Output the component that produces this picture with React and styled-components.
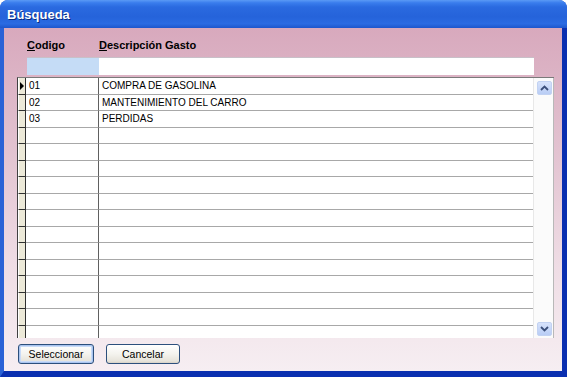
import React from "react";
import styled, { createGlobalStyle } from "styled-components";

const Global = createGlobalStyle`
  html, body { margin: 0; padding: 0; background: #ffffff; }
  body { font-family: "Liberation Sans", Arial, sans-serif; }
  * { box-sizing: border-box; }
`;

const Window = styled.div`
  width: 567px;
  height: 377px;
  display: flex;
  flex-direction: column;
  border-radius: 8px 8px 0 0;
  overflow: hidden;
  background: #1c4fc8;
`;

const TitleBar = styled.div`
  height: 28px;
  flex: none;
  display: flex;
  align-items: center;
  padding: 1px 0 0 7px;
  background: linear-gradient(
    to bottom,
    #5a9af5 0%,
    #3a7ded 10%,
    #2a6ae0 25%,
    #2563da 60%,
    #2a6be2 85%,
    #1d56cc 100%
  );
`;

const Title = styled.span`
  color: #ffffff;
  font-family: "Liberation Sans", Arial, sans-serif;
  font-weight: bold;
  font-size: 13px;
  text-shadow: 1px 1px 0 #0a2a80;
`;

const Client = styled.div`
  flex: 1;
  display: flex;
  flex-direction: column;
  border-left: 4px solid #2a62d6;
  border-right: 5px solid #0a2fb0;
  border-bottom: 6px solid #0a2fb0;
  background: linear-gradient(to bottom, #d8a9bd 0%, #e2c2d0 35%, #efdde5 70%, #f6eef2 100%);
  padding-top: 10px;
`;

const LabelRow = styled.div`
  display: grid;
  grid-template-columns: 72px 1fr;
  margin-left: 23px;
  height: 14px;
  font-size: 11px;
  line-height: 14px;
  font-weight: bold;
  color: #000;
`;

const Label = styled.span`
  white-space: nowrap;
  & u { text-decoration: underline; }
`;

const FilterRow = styled.div`
  display: flex;
  margin: 5px 0 0 23px;
  height: 18px;
`;

const FilterInput = styled.div`
  width: ${(p) => p.$w}px;
  height: 18px;
  background: ${(p) => (p.$active ? "#c5dcf6" : "#ffffff")};
  border-top: 1px solid #c8c0c8;
`;

const GridWrap = styled.div`
  margin: 2px 0 0 13px;
  width: 537px;
  height: 261px;
  display: flex;
  border-top: 1px solid #7a7a7a;
  border-left: 1px solid #404040;
  overflow: hidden;
`;

const Rows = styled.div`
  flex: 1;
  display: flex;
  flex-direction: column;
  background: #ffffff;
`;

const Row = styled.div`
  flex: none;
  height: 16.5px;
  display: grid;
  grid-template-columns: 8px 73px 1fr;
  font-size: 10px;
  color: #000;
`;

const RowHead = styled.div`
  background: #ece9d8;
  border-right: 1px solid #303030;
  border-bottom: 1px solid #303030;
  border-left: 1px solid #ffffff;
  display: flex;
  align-items: center;
  justify-content: flex-start;
`;

const Cell = styled.div`
  border-bottom: 1px solid #a8a8a8;
  border-right: ${(p) => (p.$sep ? "1px solid #606060" : "none")};
  padding-left: 3px;
  display: flex;
  align-items: center;
  white-space: nowrap;
  overflow: hidden;
`;

const Pointer = styled.span`
  width: 0;
  height: 0;
  border-top: 4px solid transparent;
  border-bottom: 4px solid transparent;
  border-left: 4px solid #000;
  margin-left: 1px;
`;

const ScrollBar = styled.div`
  width: 21px;
  flex: none;
  display: flex;
  flex-direction: column;
  justify-content: space-between;
  align-items: center;
  padding: 3px 0 2px 2px;
  background: #fbfbfb;
  border-left: 1px solid #e8e8e8;
  border-right: 1px solid #b8b8b8;
`;

const ScrollBtn = styled.div`
  width: 15px;
  height: 14px;
  border-radius: 2px;
  background: linear-gradient(to bottom, #d6e2fb, #b9cdf5);
  border: 1px solid #c2d2f2;
  display: flex;
  align-items: center;
  justify-content: center;
`;

const ButtonRow = styled.div`
  display: flex;
  gap: 12px;
  margin: 6px 0 0 14px;
`;

const Button = styled.button`
  width: ${(p) => p.$w}px;
  height: 20px;
  padding: 0;
  border: 1px solid #2c4f7c;
  border-radius: 3px;
  background: linear-gradient(to bottom, #ffffff 0%, #f4f3ee 50%, #e6e3da 90%, #d6d0c5 100%);
  box-shadow: ${(p) => (p.$default ? "inset 0 0 0 1px #a9c4ef, inset 0 0 0 2px #c9dbf7" : "none")};
  font-family: "Liberation Sans", Arial, sans-serif;
  font-size: 10.5px;
  color: #000;
`;

const Chevron = ({ up }) => (
  <svg width="9" height="6" viewBox="0 0 9 6">
    <path
      d={up ? "M1 5 L4.5 1.5 L8 5" : "M1 1 L4.5 4.5 L8 1"}
      fill="none"
      stroke="#3b4f7a"
      strokeWidth="1.8"
    />
  </svg>
);

const data = [
  { code: "01", desc: "COMPRA DE GASOLINA" },
  { code: "02", desc: "MANTENIMIENTO DEL CARRO" },
  { code: "03", desc: "PERDIDAS" },
];

export default function App() {
  const rows = Array.from({ length: 16 }, (_, i) => data[i] || { code: "", desc: "" });
  return (
    <>
      <Global />
      <Window>
        <TitleBar>
          <Title>Búsqueda</Title>
        </TitleBar>
        <Client>
          <LabelRow>
            <Label>
              <u>C</u>odigo
            </Label>
            <Label>
              <u>D</u>escripción Gasto
            </Label>
          </LabelRow>
          <FilterRow>
            <FilterInput $w={72} $active />
            <FilterInput $w={435} />
          </FilterRow>
          <GridWrap>
            <Rows>
              {rows.map((r, i) => (
                <Row key={i}>
                  <RowHead>{i === 0 && <Pointer />}</RowHead>
                  <Cell $sep>{r.code}</Cell>
                  <Cell>{r.desc}</Cell>
                </Row>
              ))}
            </Rows>
            <ScrollBar>
              <ScrollBtn>
                <Chevron up />
              </ScrollBtn>
              <ScrollBtn>
                <Chevron />
              </ScrollBtn>
            </ScrollBar>
          </GridWrap>
          <ButtonRow>
            <Button $w={76} $default>
              Seleccionar
            </Button>
            <Button $w={74}>Cancelar</Button>
          </ButtonRow>
        </Client>
      </Window>
    </>
  );
}
